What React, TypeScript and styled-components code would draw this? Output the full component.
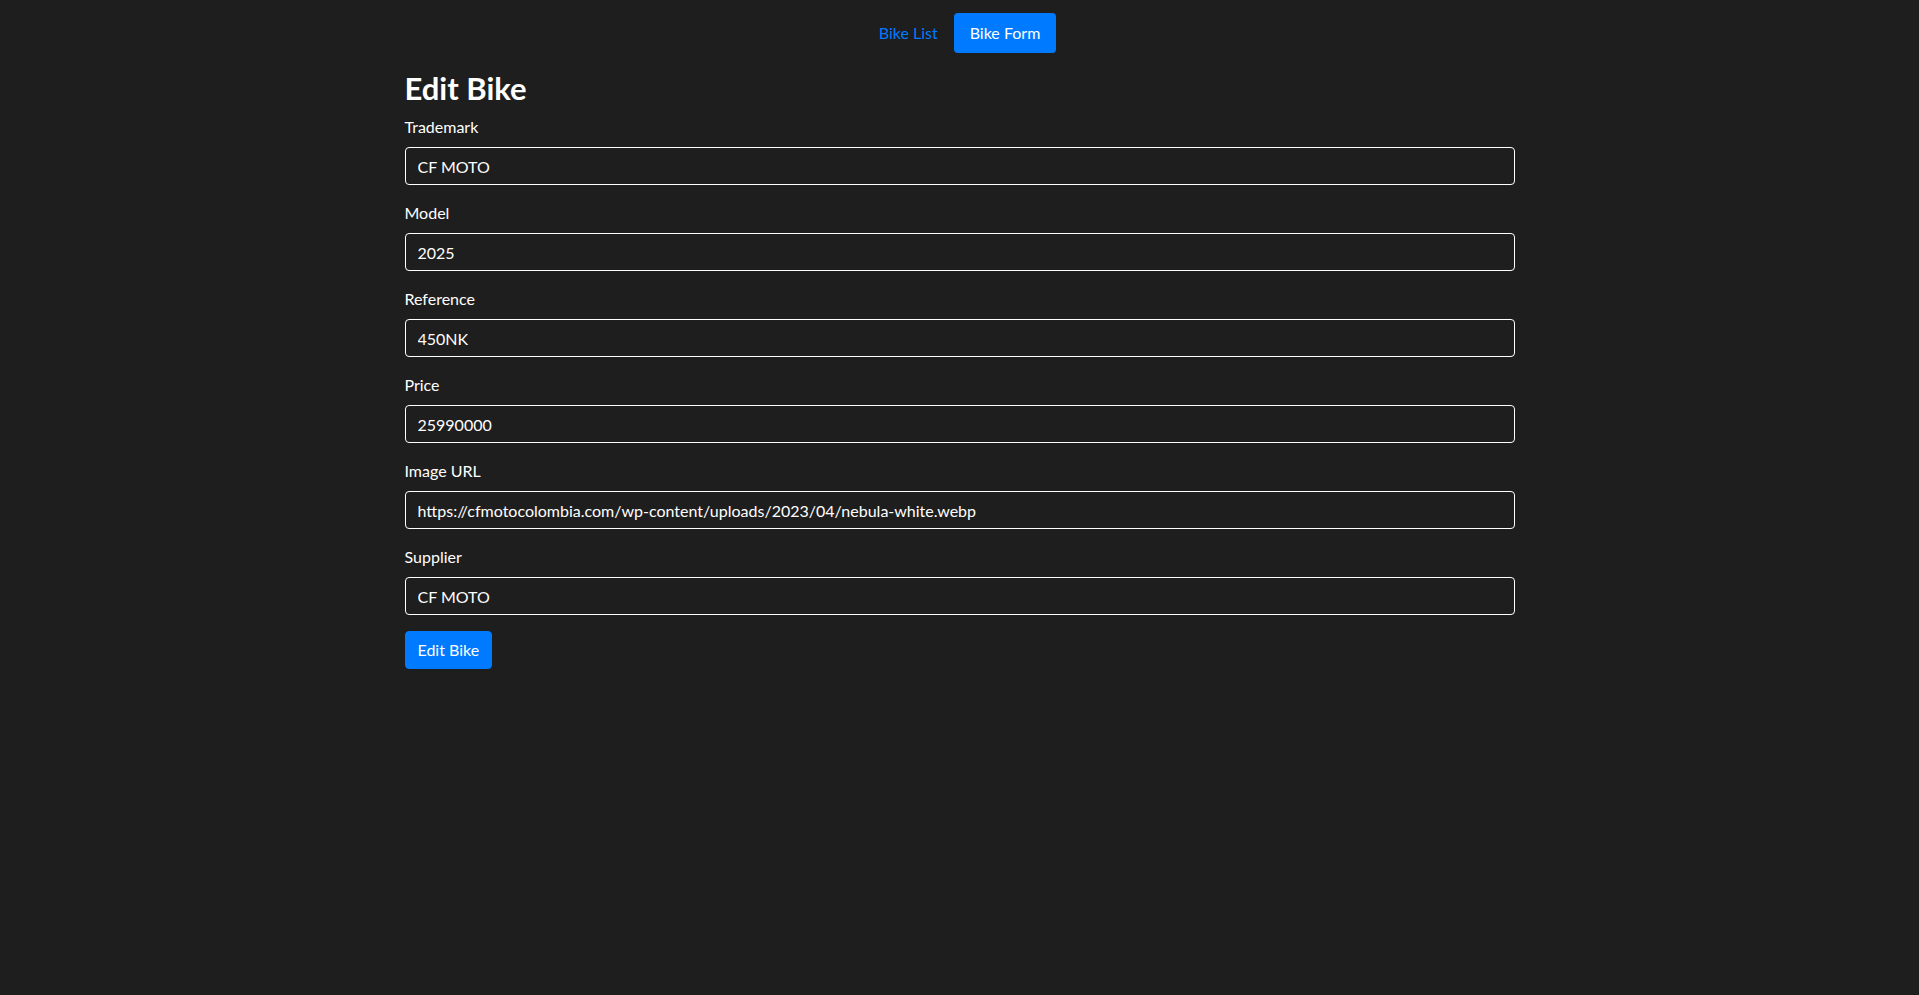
import React from "react";
import styled, { createGlobalStyle } from "styled-components";

const GlobalStyle = createGlobalStyle`
  *, *::before, *::after { box-sizing: border-box; }
  html, body { margin: 0; padding: 0; }
  body {
    background: #1e1e1e;
    color: #ffffff;
    font-family: Lato, "Open Sans", sans-serif;
    font-size: 16px;
    line-height: 1.5;
    min-height: 100vh;
  }
`;

const Page = styled.div`
  min-height: 100vh;
  background: #1e1e1e;
`;

const Nav = styled.nav`
  display: flex;
  justify-content: center;
  padding: 13px 0 0;
  margin-bottom: 16px;
`;

const NavLink = styled.a<{ $active?: boolean }>`
  display: block;
  padding: 8px 16px;
  border-radius: 4px;
  line-height: 24px;
  text-decoration: none;
  cursor: pointer;
  color: ${(p) => (p.$active ? "#ffffff" : "#007bff")};
  background: ${(p) => (p.$active ? "#007bff" : "transparent")};
`;

const Container = styled.main`
  max-width: 1140px;
  margin: 0 auto;
  padding: 0 15px;
`;

const Title = styled.h2`
  margin: 0 0 8px;
  font-size: 31px;
  font-weight: 700;
  line-height: 37.4px;
  padding-top: 1px;
`;

const FormGroup = styled.div`
  margin-bottom: 16px;
`;

const Label = styled.label`
  display: block;
  margin-bottom: 8px;
  line-height: 24px;
`;

const Input = styled.input`
  display: block;
  width: 100%;
  height: 38px;
  padding: 6px 12px;
  font-family: inherit;
  font-size: 16px;
  line-height: 24px;
  color: #ffffff;
  background: transparent;
  border: 1px solid #ffffff;
  border-radius: 4px;
  outline: none;
`;

const Button = styled.button`
  display: inline-block;
  height: 38px;
  padding: 6px 12px;
  font-family: inherit;
  font-size: 16px;
  line-height: 24px;
  color: #ffffff;
  background: #007bff;
  border: 1px solid #007bff;
  border-radius: 4px;
  cursor: pointer;
`;

const fields = [
  { label: "Trademark", value: "CF MOTO" },
  { label: "Model", value: "2025" },
  { label: "Reference", value: "450NK" },
  { label: "Price", value: "25990000" },
  {
    label: "Image URL",
    value: "https://cfmotocolombia.com/wp-content/uploads/2023/04/nebula-white.webp",
  },
  { label: "Supplier", value: "CF MOTO" },
];

export default function App() {
  return (
    <Page>
      <GlobalStyle />
      <Nav>
        <NavLink>Bike List</NavLink>
        <NavLink $active>Bike Form</NavLink>
      </Nav>
      <Container>
        <Title>Edit Bike</Title>
        <form onSubmit={(e) => e.preventDefault()}>
          {fields.map((f) => (
            <FormGroup key={f.label}>
              <Label>{f.label}</Label>
              <Input type="text" defaultValue={f.value} />
            </FormGroup>
          ))}
          <Button type="submit">Edit Bike</Button>
        </form>
      </Container>
    </Page>
  );
}
